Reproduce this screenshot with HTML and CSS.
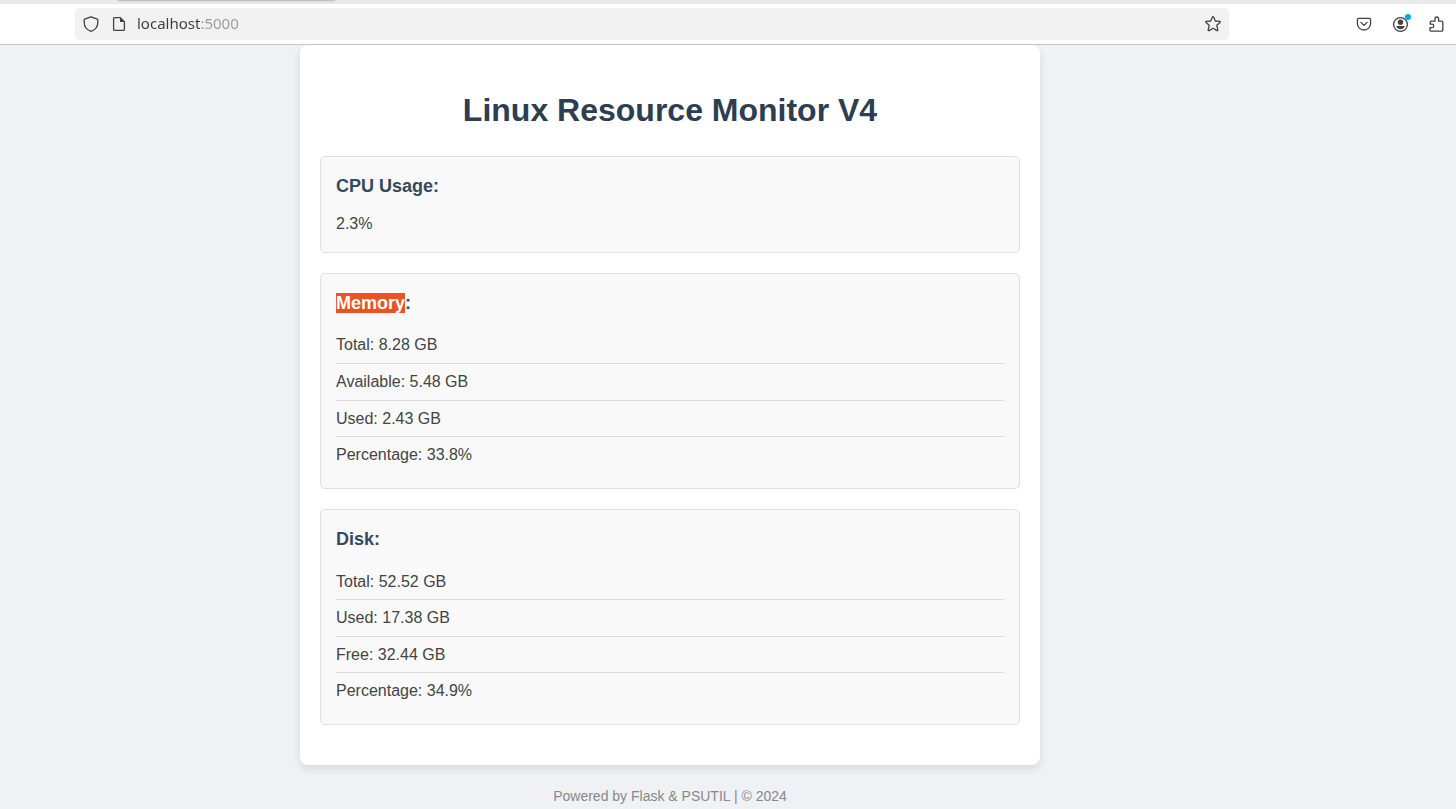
FILE: index.html
```html
<!DOCTYPE html>
<html lang="en">
<head>
<meta charset="utf-8">
<title>Linux Resource Monitor V4</title>
<link rel="stylesheet" href="styles.css">
</head>
<body>
<header class="browser">
  <div class="tab-strip"><div class="tab-edge"></div></div>
  <div class="toolbar">
    <div class="url-bar">
      <button class="icon-button" type="button" aria-label="Tracking protection">
        <svg viewBox="0 0 16 16"><path d="M8 .8 14.3 3.2Q14.8 3.4 14.8 4V6.2C14.8 10.5 12.4 13.8 8 15.3 3.6 13.8 1.2 10.5 1.2 6.2V4Q1.2 3.4 1.7 3.2Z"/></svg>
      </button>
      <button class="icon-button" type="button" aria-label="Site information">
        <svg viewBox="0 0 16 16"><path d="M9.3 1.6H3.8Q2.6 1.6 2.6 2.8V13.2Q2.6 14.4 3.8 14.4H12.2Q13.4 14.4 13.4 13.2V5.7Z"/><path class="solid" d="M9 1.5V6H13.5Z"/></svg>
      </button>
      <input class="url" type="text" aria-label="Address" value="localhost:5000">
      <button class="icon-button" type="button" aria-label="Bookmark this page">
        <svg viewBox="0 0 16 16"><path d="M7.4 1.1Q8 .2 8.6 1.1L10.3 5 14.7 5.4Q15.7 5.6 15 6.4L11.8 9.3 12.8 13.8Q12.9 15 11.9 14.6L8 12.3 4.1 14.6Q3.1 15 3.2 13.8L4.2 9.3 1 6.4Q.3 5.6 1.3 5.4L5.7 5Z"/></svg>
      </button>
    </div>
    <div class="actions">
      <button class="icon-button" type="button" aria-label="Save to Pocket">
        <svg viewBox="0 0 16 16"><path d="M2.8 2.4H13.2Q14.6 2.4 14.6 3.8V7.4C14.6 11.2 11.7 14 8 14S1.4 11.2 1.4 7.4V3.8Q1.4 2.4 2.8 2.4ZM4.9 6.4 8 9.4 11.1 6.4"/></svg>
      </button>
      <button class="icon-button account" type="button" aria-label="Account">
        <svg viewBox="0 0 16 16"><circle cx="8.5" cy="8.5" r="6.9"/><circle class="solid" cx="8.5" cy="6.3" r="2.7"/><path class="solid" d="M4.3 10H12.7C12.5 12 10.9 13.2 8.5 13.2S4.5 12 4.3 10Z"/></svg>
        <span class="dot"></span>
      </button>
      <button class="icon-button" type="button" aria-label="Extensions">
        <svg viewBox="0 0 16 16"><path d="M3.2 15.2H13.6Q14.8 15.2 14.8 14V6.4Q14.8 5.2 13.6 5.2H10.6V3Q10.6 1 8.8 1T7 3V5.2H3.4Q2.2 5.2 2.2 6.4V8.2H4Q5.8 8.2 5.8 9.9T4 11.6H2V14Q2 15.2 3.2 15.2Z"/></svg>
      </button>
    </div>
  </div>
</header>
<div class="page">
  <main class="container">
    <h1>Linux Resource Monitor V4</h1>
    <section class="metric">
      <h2>CPU Usage:</h2>
      <p>2.3%</p>
    </section>
    <section class="metric">
      <h2><mark>Memory</mark>:</h2>
      <ul>
        <li>Total: 8.28 GB</li>
        <li>Available: 5.48 GB</li>
        <li>Used: 2.43 GB</li>
        <li>Percentage: 33.8%</li>
      </ul>
    </section>
    <section class="metric">
      <h2>Disk:</h2>
      <ul>
        <li>Total: 52.52 GB</li>
        <li>Used: 17.38 GB</li>
        <li>Free: 32.44 GB</li>
        <li>Percentage: 34.9%</li>
      </ul>
    </section>
  </main>
  <footer class="footer">Powered by Flask &amp; PSUTIL | © 2024</footer>
</div>
</body>
</html>
```
FILE: styles.css
```css
* { box-sizing: border-box; }

body {
  margin: 0;
  background: #f0f1f5;
  color: #444;
  font-family: "Liberation Sans", Arial, sans-serif;
  font-size: 16px;
  line-height: 1.6;
}

/* Browser chrome */
.browser {
  background: #fff;
  border-bottom: 1px solid #c8c8c8;
}

.tab-strip {
  height: 4px;
  padding-left: 118px;
  background: #eaeaea;
  overflow: hidden;
}

.tab-edge {
  width: 217px;
  height: 1px;
  background: #c0c0c0;
  box-shadow: 0 0 3px #b0b0b0;
}

.toolbar {
  display: flex;
  align-items: center;
  justify-content: space-between;
  gap: 24px;
  padding: 4px 12px 4px 75px;
}

.url-bar {
  display: flex;
  flex: 1;
  align-items: center;
  gap: 12px;
  max-width: 1154px;
  height: 32px;
  padding: 0 8px;
  border-radius: 4px;
  background: #f1f1f1;
}

.url {
  flex: 1;
  min-width: 0;
  height: 24px;
  margin-left: -2px;
  padding: 0 0 2px;
  border: 0;
  outline: 0;
  background: linear-gradient(to right, #3c3c3c 63px, #999 63px);
  background-clip: text;
  -webkit-background-clip: text;
  color: transparent;
  font-family: "Noto Sans", "Open Sans", sans-serif;
  font-size: 15px;
}

.icon-button {
  flex: none;
  width: 16px;
  height: 16px;
  padding: 0;
  border: 0;
  background: none;
}

.icon-button svg {
  display: block;
  width: 16px;
  height: 16px;
  fill: none;
  stroke: #424242;
  stroke-width: 1.3;
  stroke-linejoin: round;
  stroke-linecap: round;
  overflow: visible;
}

.icon-button .solid {
  fill: #424242;
  stroke: none;
}

.actions {
  display: flex;
  gap: 20px;
}

.account { position: relative; }

.dot {
  position: absolute;
  top: -2px;
  right: -3px;
  width: 6px;
  height: 6px;
  border-radius: 50%;
  background: #00a8f0;
}

/* Page */
.page { padding-right: 116px; }

.container {
  max-width: 740px;
  margin: 0 auto;
  padding: 20px;
  border-radius: 8px;
  background: #fff;
  box-shadow: 0 4px 8px rgba(0, 0, 0, 0.1);
}

h1 {
  margin: 20px 0;
  color: #2c3e50;
  font-size: 32px;
  text-align: center;
}

.metric {
  margin-bottom: 20px;
  padding: 15px;
  border: 1px solid #e0e0e4;
  border-radius: 5px;
  background: #f9f9f9;
}

h2 {
  margin: 0 0 10px;
  color: #34495e;
  font-size: 18px;
}

mark {
  background: #e95420;
  color: #fff;
}

p { margin: 0; }

ul {
  margin: 0;
  padding: 0;
  list-style: none;
}

li {
  padding: 5px 0;
  border-bottom: 1px solid #ddd;
}

li:last-child { border-bottom: 0; }

.footer {
  margin-top: 20px;
  color: #888;
  font-size: 14px;
  text-align: center;
}
```
